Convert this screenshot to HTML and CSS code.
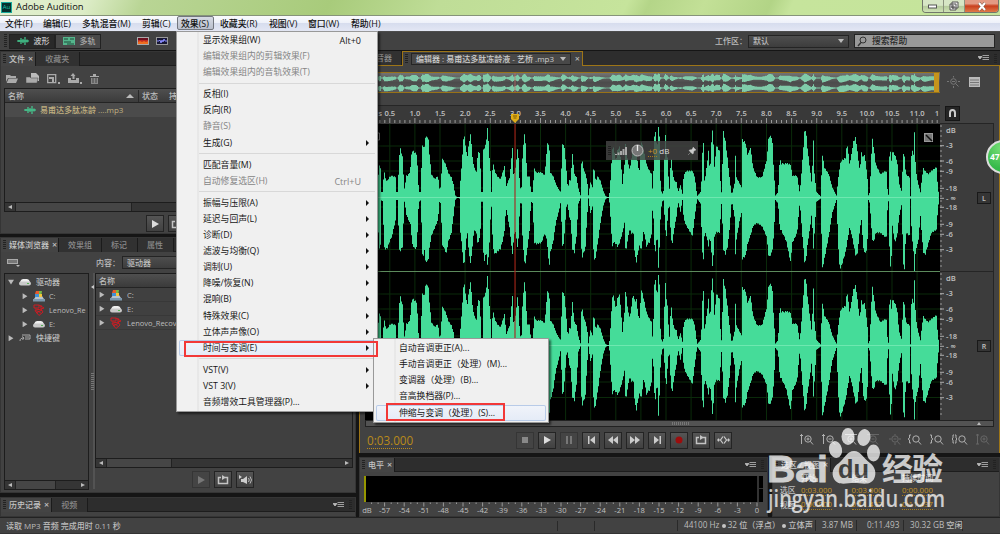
FILE: index.html
```html
<!DOCTYPE html>
<html lang="zh-CN">
<head>
    <meta charset="utf-8">
    <title>Adobe Audition</title>
    <link rel="stylesheet" href="styles.css">
</head>
<body>
<svg width="0" height="0" class="defs">
    <defs>
        <symbol id="wave" viewBox="0 0 12 8"><path d="M0 4h12M2 3v2M4 1v6M6 2v4M8 0v8M10 2.5v3" stroke="#45d898" stroke-width="1.1" fill="none"/></symbol>
        <symbol id="folder" viewBox="0 0 12 9"><path d="M0 8V1h4l1 1h5v2H2zM2.600 4.500H12L10 9H.6z" fill="#aaa"/></symbol>
        <symbol id="list" viewBox="0 0 11 6"><path d="M0 1.500h4L2 4zM4.500 .5H11M4.500 2.500H11M4.500 4.500H11" fill="#bbb" stroke="#bbb" stroke-width=".8"/></symbol>
        <symbol id="drive" viewBox="0 0 12 8"><path d="M1 4Q2 1 4 1h4q2 0 3 3z" fill="#eee"/><rect y="3.500" width="12" height="4" rx="2" fill="#c9c9c9"/><path d="M8 5.500h2" stroke="#55b555"/></symbol>
        <symbol id="cdrive" viewBox="0 0 12 12"><path d="M1 9l2-3h6l2 3v2H1z" fill="#b8c4cc"/><path d="M0 9h12v2.500H0z" fill="#7c98ad"/><path d="M3 1h3v3H2z" fill="#e85b2c"/><path d="M6 1h3l-.5 3H6z" fill="#75b945"/><path d="M2 4h4v3H2z" fill="#3f91d5"/><path d="M6 4h3v3H6z" fill="#f3c33b"/></symbol>
        <symbol id="rescue" viewBox="0 0 12 12"><path d="M1 1h5v3H1zM6 1l5 3-3 1 2 3-4 3.500-4-5 4 1 2 2M2 5l7 1M8 1v4M3 9l6-3" fill="none" stroke="#d81820" stroke-width=".9"/></symbol>
        <symbol id="shortcut" viewBox="0 0 12 8"><path d="M3 1h8v4H6M1 7c0-2 1-3 4-3M3 2.500L5 4 3.500 6M6 3h4" fill="none" stroke="#aaa"/></symbol>
        <symbol id="loop" viewBox="0 0 12 10"><path d="M4 2.500H1.500v6h9V2.500H8" fill="none" stroke="#c4c4c4" stroke-width="1.500"/><path d="M5 0l4 2.500L5 5z" fill="#c4c4c4"/></symbol>
        <symbol id="mag" viewBox="0 0 14 12"><circle cx="8" cy="5" r="3.200"/><path d="M10.300 7.300L13 10.500"/></symbol>
    </defs>
</svg>

<header class="title-bar">
    <span class="app-icon">Au</span>
    <span class="app-title">Adobe Audition</span>
    <div class="window-buttons">
        <i><svg width="10" height="6"><rect x=".5" y="2" width="8" height="3" fill="#fff" stroke="#555"/></svg></i>
        <i><svg width="10" height="10"><path d="M3 1h6v6H3zM1 3h6v6H1zM3 5h2v2H3z" fill="#eee" stroke="#555"/></svg></i>
        <i class="close"><svg width="10" height="9"><path d="M2 1l6 7M8 1L2 8" stroke="#754" stroke-width="3"/><path d="M2 1l6 7M8 1L2 8" stroke="#fff" stroke-width="2"/></svg></i>
    </div>
</header>

<nav class="menu-bar">
    <span>文件(F)</span><span>编辑(E)</span><span>多轨混音(M)</span><span>剪辑(C)</span><span class="open">效果(S)</span><span>收藏夹(R)</span><span>视图(V)</span><span>窗口(W)</span><span>帮助(H)</span>
</nav>

<div class="tool-bar">
    <i class="grip"></i>
    <button class="mode active"><svg width="12" height="8"><use href="#wave"/></svg>波形</button>
    <button class="mode"><svg width="12" height="8"><path d="M0 0h12v8H0z" fill="#55b58c"/><path d="M1 2h4M7 2h4M1 5h7M4 7h7" stroke="#1e4938"/></svg>多轨</button>
    <svg class="spectral" width="12" height="8"><path d="M0 0h12v8H0z" fill="#c22b22"/><path d="M1 1h10v2H1z" fill="#6d1020"/><path d="M1 7V5l2-1 2 1 2-1 2 1 2-1v3z" fill="#ee6d20"/><rect x=".5" y=".5" width="11" height="7" fill="none" stroke="#aaa"/></svg>
    <svg width="12" height="8"><rect x=".5" y=".5" width="11" height="7" fill="#171735" stroke="#999"/><path d="M1 4h2l1-1 1 3 1-3 1 2 1-3 1 2h2" fill="none" stroke="#898cff"/></svg>
    <span class="workspace">工作区：</span>
    <div class="select"><span>默认</span><i class="down"></i></div>
    <div class="search"><svg width="11" height="11"><circle cx="6" cy="4" r="3" fill="none" stroke="#333"/><path d="M4 6.500L1 10" stroke="#333" stroke-width="1.400"/></svg>搜索帮助</div>
</div>

<main>
    <div class="left">
        <section class="panel files">
            <div class="tabs"><span class="tab active"><i class="grip"></i>文件<b>×</b></span><span class="tab">收藏夹</span></div>
            <div class="file-tools">
                <svg width="12" height="9"><use href="#folder"/></svg>
                <svg width="13" height="11"><path d="M5 0h5l3 3v5H5z" fill="#bbb"/><path d="M0 4h4l1 1h7l-1 5H0z" fill="#aaa" stroke="#444" stroke-width=".5"/></svg>
                <svg width="13" height="10"><path d="M.7.700h8v8h-8z" fill="none" stroke="#aaa" stroke-width="1.300"/><path d="M2 3h5v5H5V5H2z" fill="#aaa"/><path d="M11 8h2v2h-2z" fill="#aaa"/></svg>
                <svg width="14" height="11"><path d="M0 5h3v2h5V5h3v5H0zM5 0l2.500 3h-1v3h-2V3h-2zM12 9h2v2h-2z" fill="#aaa"/></svg>
                <svg width="9" height="10"><path d="M0 2h3V0h3v2h3v1H0z" fill="#aaa"/><path d="M1 4h7v6H1z" fill="#888"/><path d="M3 4v5M6 4v5" stroke="#444"/></svg>
            </div>
            <div class="box file-list">
                <div class="head"><span class="name">名称</span><i class="up"></i><span class="state">状态</span><span>持</span></div>
                <div class="file"><svg width="12" height="8"><use href="#wave"/></svg>易甫达多肽冻龄 ....mp3</div>
                <div class="scroll"><i class="arrow-l"></i><span class="thumb"></span></div>
            </div>
            <div class="buttons file-buttons"><button><i class="play"></i></button><button><svg width="12" height="10"><use href="#loop"/></svg></button></div>
        </section>

        <section class="panel media">
            <div class="tabs"><span class="tab active"><i class="grip"></i>媒体浏览器<b>×</b></span><span class="tab">效果组</span><span class="tab">标记</span><span class="tab">属性</span></div>
            <div class="media-tools">
                <svg width="13" height="9"><rect x=".5" y="1.500" width="10" height="4" fill="#777" stroke="#aaa"/><path d="M9 7h4l-2 2z" fill="#bbb"/></svg>
                <span>内容：</span><div class="select">驱动器</div>
            </div>
            <div class="media-lists">
                <div class="box tree">
                    <div><i class="tri-d"></i><svg width="12" height="8"><use href="#drive"/></svg>驱动器</div>
                    <div class="sub"><i class="tri"></i><svg width="12" height="12"><use href="#cdrive"/></svg>C:</div>
                    <div class="sub"><i class="tri"></i><svg width="12" height="12"><use href="#rescue"/></svg>Lenovo_Re</div>
                    <div class="sub"><i class="tri"></i><svg width="12" height="8"><use href="#drive"/></svg>E:</div>
                    <div><i class="tri"></i><svg width="12" height="8"><use href="#shortcut"/></svg>快捷键</div>
                    <div class="scroll"><i class="arrow-l"></i><span class="thumb"></span><i class="arrow-r"></i></div>
                </div>
                <div class="splitter"><i></i></div>
                <div class="media-right">
                    <div class="box contents">
                        <div class="head"><span>名称</span></div>
                        <div class="entry"><i class="tri"></i><svg width="12" height="12"><use href="#cdrive"/></svg>C:</div>
                        <div class="entry"><i class="tri"></i><svg width="12" height="8"><use href="#drive"/></svg>E:</div>
                        <div class="entry"><i class="tri"></i><svg width="12" height="12"><use href="#rescue"/></svg>Lenovo_Recovery</div>
                        <div class="scroll"><i class="arrow-l"></i><span class="thumb"></span><i class="arrow-r"></i></div>
                    </div>
                    <div class="buttons">
                        <button class="off"><i class="play"></i></button>
                        <button><svg width="12" height="10"><use href="#loop"/></svg></button>
                        <button><svg width="13" height="10"><path d="M0 0l3 2-3 2zM2 4h2l4-3v8L4 7H2z" fill="#ccc"/><path d="M9.500 3q1.500 2 0 4M11 1.500q3 3.500 0 7" fill="none" stroke="#bbb"/></svg></button>
                    </div>
                </div>
            </div>
        </section>

        <section class="panel history">
            <div class="tabs"><span class="tab active"><i class="grip"></i>历史记录<b>×</b></span><span class="tab">视频</span><svg class="tab-menu" width="11" height="6"><use href="#list"/></svg><i class="grip end"></i></div>
        </section>
    </div>

    <div class="right">
        <section class="panel editor">
            <div class="tabs">
                <span class="tab mixer">音器</span>
                <span class="tab gold"><i class="grip"></i><span class="file-select">编辑器 : 易甫达多肽冻龄液 - 艺桥 .mp3<i class="down"></i></span><b>×</b></span>
                <svg class="tab-menu" width="11" height="6"><use href="#list"/></svg><i class="grip end"></i>
            </div>
            <div class="editor-body">
                <div class="overview-row">
                    <svg class="overview" width="575" height="21" viewBox="365 71 575 21"></svg>
                    <svg width="13" height="12" stroke="#777" fill="none"><circle cx="6.500" cy="5.500" r="2.800"/><path d="M8.500 7.500l3 3M5 5.500h3M6.500 0v1.500M0 5.500h2M11 5.500h2M6.500 10v2"/></svg>
                    <svg width="11" height="10"><path d="M0 0h11v10H0z" fill="#bbb"/><path d="M1 3h9M1 5.500h9M1 8h9" stroke="#777"/></svg>
                </div>
                <div class="wave-row">
                    <svg class="waveform" width="575" height="315" viewBox="365 105 575 315"></svg>
                    <svg class="levels" width="55" height="315" viewBox="940 105 55 315"></svg>
                </div>
                <div class="view-scroll"><i class="ribs"></i><i class="up"></i></div>
                <div class="transport">
                    <span class="time">0:03.000</span>
                    <div class="buttons">
                        <button class="off"><svg width="8" height="8"><path d="M1 1h6v6H1z" fill="#888"/></svg></button>
                        <button><i class="play"></i></button>
                        <button class="off"><svg width="8" height="8"><path d="M1 0h2v8H1zM5 0h2v8H5z" fill="#777"/></svg></button>
                        <button><svg width="9" height="8"><path d="M1 0h1.500v8H1zM8 0v8L3 4z" fill="#ccc"/></svg></button>
                        <button><svg width="10" height="8"><path d="M5 0v8L0 4zM10 0v8L5 4z" fill="#ccc"/></svg></button>
                        <button><svg width="10" height="8"><path d="M0 0l5 4-5 4zM5 0l5 4-5 4z" fill="#ccc"/></svg></button>
                        <button><svg width="9" height="8"><path d="M1 0l5 4-5 4zM6.500 0H8v8H6.500z" fill="#ccc"/></svg></button>
                        <button><svg width="8" height="8"><circle cx="4" cy="4" r="3.500" fill="#9c0d0d"/></svg></button>
                        <button><svg width="12" height="10"><use href="#loop"/></svg></button>
                        <button><svg width="13" height="8"><path d="M0 4h3M1.500 2.500v3M6 .5L3.500 4 6 7.500M7 .5L9.500 4 7 7.500M10 4h3M11.500 2.500v3" fill="none" stroke="#ccc" stroke-width="1.200"/></svg></button>
                    </div>
                    <div class="zooms">
                        <svg width="14" height="12"><use href="#mag"/><path d="M1.500 0v10M0 1.500h3M6.500 5h3M8 3.500v3"/></svg>
                        <svg width="14" height="12"><use href="#mag"/><path d="M1.500 0v10M0 1.500h3M6.500 5h3"/></svg>
                        <svg width="14" height="12"><use href="#mag"/><path d="M2 .5h12M6.500 5h3M8 3.500v3"/></svg>
                        <svg class="off" width="14" height="12"><use href="#mag"/><path d="M2 .5h12M6.500 5h3"/></svg>
                        <svg class="off" width="14" height="12"><use href="#mag"/><path d="M8 0v1M2 5h2M12 5h2M6.500 5h3M8 9v2"/></svg>
                        <svg width="14" height="12"><use href="#mag"/><path d="M3 1H1.500v3L0 5l1.500 1v3H3"/></svg>
                        <svg width="14" height="12"><use href="#mag"/><path d="M0 1h1.500v3L3 5 1.500 6v3H0"/></svg>
                        <svg width="16" height="12" viewBox="-2 0 16 12"><use href="#mag" width="14" height="12"/><path d="M0 1h-1v3l-1 1 1 1v3h1M1 1h1v3l1 1-1 1v3H1"/></svg>
                        <svg class="off" width="14" height="12"><use href="#mag"/><path d="M1.500 0v10M0 1h3M0 10h3M6.500 5h3M8 3.500v3"/></svg>
                    </div>
                </div>
            </div>
        </section>

        <div class="bottom">
            <section class="panel meter">
                <div class="tabs"><span class="tab active"><i class="grip"></i>电平<b>×</b></span><svg class="tab-menu" width="11" height="6"><use href="#list"/></svg><i class="grip end"></i></div>
                <div class="meter-bar"><i></i></div>
                <svg class="meter-scale" width="404" height="14" viewBox="360 502 404 14"></svg>
            </section>
            <section class="panel selection">
                <div class="tabs"><span class="tab active"><i class="grip"></i>选区 / 视图<b>×</b></span><svg class="tab-menu" width="11" height="6"><use href="#list"/></svg><i class="grip end"></i></div>
                <div class="times">
                    <span></span><span>开始</span><span>结束</span><span>持续时间</span>
                    <span>选区</span><em>0:03.000</em><em>0:03.000</em><em>0:00.000</em>
                    <span>视图</span><em>0:00.000</em><em>0:11.437</em><em>0:11.437</em>
                </div>
            </section>
        </div>
    </div>
</main>

<footer class="status-bar">
    <span class="message">读取 MP3 音频 完成用时 0.11 秒</span>
    <i class="s1"></i><i class="s2"></i>
    <span class="format">44100 Hz <i class="dot"></i> 32 位（浮点） <i class="dot"></i> 立体声</span>
    <span class="size">3.87 MB</span>
    <span class="length">0:11.493</span>
    <span class="free">30.32 GB 空闲</span>
</footer>

<div class="hud"><i class="grip"></i><svg width="12" height="8"><path d="M0 8V7h2v1zM2.500 8V5.500h2V8zM5 8V4h2v4zM7.500 8V2h2v6zM10 8V0h2v8z" fill="#aaa"/></svg><svg width="13" height="13"><circle cx="6.500" cy="6.500" r="5.500" fill="#777" stroke="#bbb"/><path d="M6.500 1v6" stroke="#eee" stroke-width="1.300"/></svg><span><em>+0</em> dB</span><svg class="pin" width="8" height="8"><path d="M5 0l3 3-1 .3-1.500 1.500v1.500L4.500 7 1 3.500 2 2.800h1.500L5 1zM2.500 5.500L0 8" fill="#ccc" stroke="#ccc" stroke-width=".4"/></svg></div>
<div class="badge">47</div>

<div class="menu effects">
    <div>显示效果组(W)<kbd>Alt+0</kbd></div>
    <div class="off">编辑效果组内的剪辑效果(F)</div>
    <div class="off">编辑效果组内的音轨效果(T)</div>
    <hr>
    <div>反相(I)</div>
    <div>反向(R)</div>
    <div class="off">静音(S)</div>
    <div class="more">生成(G)</div>
    <hr>
    <div>匹配音量(M)</div>
    <div class="off">自动修复选区(H)<kbd>Ctrl+U</kbd></div>
    <hr>
    <div class="more">振幅与压限(A)</div>
    <div class="more">延迟与回声(L)</div>
    <div class="more">诊断(D)</div>
    <div class="more">滤波与均衡(Q)</div>
    <div class="more">调制(U)</div>
    <div class="more">降噪/恢复(N)</div>
    <div class="more">混响(B)</div>
    <div class="more">特殊效果(C)</div>
    <div class="more">立体声声像(O)</div>
    <div class="more hover">时间与变调(E)</div>
    <hr>
    <div class="more">VST(V)</div>
    <div class="more">VST 3(V)</div>
    <div>音频增效工具管理器(P)...</div>
</div>
<div class="menu pitch">
    <div>自动音调更正(A)...</div>
    <div>手动音调更正（处理）(M)...</div>
    <div>变调器（处理）(B)...</div>
    <div>音高换档器(P)...</div>
    <div class="hover">伸缩与变调（处理）(S)...</div>
</div>
<div class="mark mark-effects"></div>
<div class="mark mark-pitch"></div>

<svg class="watermark" width="190" height="100" viewBox="760 420 190 100">
    <g fill="#fff">
        <text x="767" y="482" font-size="37" font-weight="700" stroke="#fff" stroke-width=".8" textLength="61" lengthAdjust="spacingAndGlyphs">Bai</text>
        <ellipse cx="835.500" cy="449.500" rx="6.500" ry="8.500" transform="rotate(-12 835.500 449.500)"/>
        <ellipse cx="848" cy="436.500" rx="6.500" ry="8.500"/>
        <ellipse cx="864" cy="437.500" rx="6.500" ry="8.500" transform="rotate(12 864 437.500)"/>
        <ellipse cx="873.500" cy="453" rx="6.500" ry="8.500"/>
        <path d="M854 451c-7 0-9 7-15 12-6 4-8 10-5 16 4 7 12 4 20 4s16 3 20-4c3-6 1-12-4-16-7-5-9-12-16-12z"/>
        <text x="882" y="480" font-size="31" font-weight="700" class="cn" textLength="61">经验</text>
        <text x="768" y="507" font-size="22.500" class="url" textLength="177" lengthAdjust="spacingAndGlyphs">jingyan.baidu.com</text>
    </g>
    <text x="838" y="478" font-size="25" font-weight="700" fill="#444" textLength="31" lengthAdjust="spacingAndGlyphs">du</text>
</svg>
<script src="app.js"></script>
</body>
</html>
```
FILE: styles.css
```css
* {
    box-sizing: border-box;
}

body {
    margin: 0;
    width: 1000px;
    height: 534px;
    overflow: hidden;
    position: relative;
    background: #151515;
    color: #bdbdbd;
    font: 500 8px/12px "Open Sans", "Noto Sans CJK SC", sans-serif;
}

i, em {
    font-style: normal;
}

svg {
    flex: none;
    display: block;
}

.defs {
    position: absolute;
}

.title-bar {
    height: 16px;
    display: flex;
    align-items: center;
    background: linear-gradient(115deg, #e1efce 0, #dcecc6 80px, #b9d595 130px, #a8cb7b 300px, #bfdd97 400px, #c6e49c 570px, #b4d588 590px, #c3e097 640px, #b2d486 700px, #c6e49c 720px, #c4e49a 1000px);
    border-bottom: 1px solid #86947a;
    color: #111;
}

.app-icon {
    width: 11px;
    height: 11px;
    margin: 0 4px 1px 1px;
    border: 1px solid #16a99b;
    background: #07302d;
    color: #16c9b2;
    font-size: 6px;
    line-height: 9px;
    text-align: center;
}

.app-title {
    font-size: 9.4px;
    margin-bottom: 1px;
}

.window-buttons {
    display: flex;
    align-self: flex-start;
    height: 13px;
    width: 77px;
    margin: 0 1px 0 auto;
    border: 1px solid #71776b;
    border-top: 0;
    border-radius: 0 0 4px 4px;
    overflow: hidden;
}

.window-buttons i {
    width: 21px;
    display: flex;
    align-items: center;
    justify-content: center;
    border-right: 1px solid #8c947f;
    background: linear-gradient(#d7e6c5 45%, #b4c99b 50%, #cfe3b5);
}

.window-buttons .close {
    flex: 1;
    border: 0;
    background: linear-gradient(#e39a83 30%, #c93f1d 50%, #df7a4a);
}

.menu-bar {
    height: 15px;
    display: flex;
    background: linear-gradient(#fafbfd 0, #eef1f9 45%, #d7ddee 50%, #e3e7f4);
    color: #111;
    font-size: 8.9px;
    line-height: 15px;
}

.menu-bar span {
    width: 39px;
    padding-left: 5px;
    white-space: nowrap;
}

.menu-bar span:nth-child(1) { width: 38px; }
.menu-bar span:nth-child(3) { width: 60px; }
.menu-bar span:nth-child(4) { width: 40px; }
.menu-bar span:nth-child(6) { width: 49px; }
.menu-bar span:nth-child(8) { width: 43px; }

.menu-bar .open {
    width: 37px;
    margin-right: 1px;
    line-height: 13px;
    height: 14px;
    border: 1px solid #72767e;
    border-radius: 2px;
    background: linear-gradient(#d6dae4, #b9bfcc);
    padding-left: 3px;
}

.tool-bar {
    height: 19px;
    display: flex;
    align-items: center;
    background: #424242;
    border-top: 1px solid #4d4d4d;
}

.grip {
    display: inline-block;
    width: 3px;
    height: 9px;
    background: repeating-linear-gradient(#222 0 1px, transparent 1px 2px);
    flex: none;
}

.tool-bar .grip {
    margin: 0 2px 0 4px;
    height: 14px;
}

.mode {
    display: flex;
    align-items: center;
    gap: 4.5px;
    width: 46px;
    height: 15px;
    padding: 0 0 0 7px;
    border: 1px solid #222;
    background: #494949;
    color: #aaa;
    font: inherit;
}

.mode.active {
    background: #292929;
    color: #c6c6c6;
}

.spectral {
    margin: 0 7px 0 36px;
}

.workspace {
    width: 33px;
    margin-left: 547px;
    white-space: nowrap;
}

.select {
    display: flex;
    align-items: center;
    width: 101px;
    height: 13px;
    padding: 0 4px;
    border: 1px solid #242424;
    background: linear-gradient(#4e4e4e, #3d3d3d);
}

.down, .up {
    width: 0;
    height: 0;
    border: 3px solid transparent;
    border-top: 4px solid #bbb;
    border-bottom: 0;
    margin-left: auto;
    flex: none;
}

.up {
    border: 4px solid transparent;
    border-bottom: 4px solid #bbb;
    border-top: 0;
}

.search {
    display: flex;
    gap: 4px;
    align-items: center;
    width: 141px;
    height: 14px;
    margin-left: 5px;
    padding-left: 2px;
    border: 1px solid #242424;
    background: #999;
    color: #292929;
    font-size: 8.8px;
}

main {
    display: flex;
    gap: 3px;
    height: 467px;
    padding-top: 1px;
}

.left {
    width: 356px;
    display: flex;
    flex-direction: column;
    gap: 3px;
}

.right {
    width: 641px;
    display: flex;
    flex-direction: column;
    gap: 4px;
}

.panel {
    background: #424242;
    border: 1px solid #353535;
    min-width: 0;
    overflow: hidden;
}

.tabs {
    display: flex;
    align-items: center;
    height: 14px;
    background: #2d2d2d;
    border-bottom: 1px solid #1d1d1d;
}

.tab {
    height: 14px;
    line-height: 14px;
    padding: 0 10px 0 9px;
    color: #8a8a8a;
    background: #313131;
    border-right: 1px solid #1b1b1b;
    white-space: nowrap;
}

.tab.active {
    display: flex;
    align-items: center;
    gap: 3px;
    padding: 0 2px;
    background: #444;
    color: #c4c4c4;
}

.tab b {
    font-size: 9px;
    font-weight: 600;
}

.tab-menu {
    margin-left: auto;
    margin-right: 5px;
}

.grip.end {
    margin-right: 3px;
}

.files {
    height: 184px;
    padding-right: 3px;
}

.files .tab:nth-child(2) {
    width: 44px;
}

.file-tools {
    display: flex;
    align-items: center;
    height: 22px;
    gap: 8px;
    padding: 3px 0 0 5px;
}

.box {
    border: 1px solid #1d1d1d;
    background: #404040;
    overflow: hidden;
}

.file-list {
    height: 124px;
    margin-left: 3px;
    display: flex;
    flex-direction: column;
}

.head {
    display: flex;
    align-items: center;
    height: 14px;
    flex: none;
    padding-left: 3px;
    background: linear-gradient(#4f4f4f, #3b3b3b);
    border-bottom: 1px solid #242424;
}

.head .up {
    margin: 0 4px 0 0;
}

.name {
    width: 118px;
}

.state {
    width: 31px;
    padding-left: 3px;
    border-left: 1px solid #292929;
}

.file {
    display: flex;
    align-items: center;
    height: 14px;
    gap: 4px;
    padding-left: 19px;
    background: #4b4b4b;
    color: #c0b080;
    white-space: pre;
}

.scroll {
    display: flex;
    align-items: center;
    height: 9px;
    flex: none;
    margin-top: auto;
    border-top: 1px solid #1d1d1d;
    background: #353535;
}

.thumb {
    height: 8px;
    background: #464646;
    border: 1px solid #222;
    border-width: 0 1px;
    width: 117px;
}

.arrow-l, .arrow-r {
    border: 2.5px solid transparent;
    border-right: 4px solid #bbb;
    border-left: 0;
    margin: 0 3px;
}

.arrow-r {
    border-left: 4px solid #bbb;
    border-right: 0;
    margin-left: auto;
}

.buttons {
    display: flex;
    gap: 4px;
}

.buttons button {
    width: 18px;
    height: 17px;
    padding: 0;
    display: flex;
    align-items: center;
    justify-content: center;
    background: linear-gradient(#555, #414141);
    border: 1px solid #242424;
}

.buttons .off {
    background: #444;
    border-color: #353535;
}

.play {
    border: 4px solid transparent;
    border-left: 7px solid #ddd;
    border-right: 0;
}

.off .play {
    border-left-color: #777;
}

.file-buttons {
    padding: 3px 0 0 145px;
}

.media {
    height: 257px;
}

.media .tab {
    width: 36px;
    padding-right: 0;
}

.media .tab:nth-child(2) {
    width: 43px;
}

.media .tab.active {
    width: 58px;
}

.media-tools {
    display: flex;
    align-items: center;
    height: 21px;
    padding-left: 6px;
}

.media-tools span {
    margin-left: 76px;
    width: 26px;
    white-space: nowrap;
}

.media-tools .select {
    width: 180px;
}

.media-lists {
    display: flex;
    padding-left: 3px;
}

.tree {
    width: 85px;
    height: 217px;
    display: flex;
    flex-direction: column;
    padding-top: 1px;
}

.tree > div:not(.scroll), .entry {
    display: flex;
    align-items: center;
    height: 14px;
    gap: 5px;
    padding-left: 3px;
    white-space: nowrap;
    flex: none;
}

.tree > .sub:not(.scroll) {
    padding-left: 17px;
    gap: 4.5px;
    font-size: 7.3px;
}

.contents .entry {
    font-size: 7.5px;
}

.tree .thumb {
    width: 41px;
}

.tri, .tri-d {
    width: 6px;
    height: 6px;
    flex: none;
    background: #bbb;
    clip-path: polygon(10% 0, 90% 50%, 10% 100%);
}

.tri-d {
    clip-path: polygon(0 10%, 100% 10%, 50% 90%);
}

.splitter {
    width: 6px;
    height: 216px;
    padding: 100px 2px 0;
    border-right: 2px solid #535353;
    position: relative;
}

.splitter::before {
    content: "";
    display: block;
    position: absolute;
    left: 2px;
    top: 12px;
    border: 2.5px solid transparent;
    border-right: 3px solid #ccc;
    border-left: 0;
}

.splitter i {
    display: block;
    width: 3px;
    height: 18px;
    background: repeating-linear-gradient(#777 0 1px, transparent 1px 2px);
}

.contents {
    width: 258px;
    height: 195px;
    display: flex;
    flex-direction: column;
}

.entry {
    border-bottom: 1px solid #383838;
}

.contents .thumb {
    width: 66px;
}

.media-right .buttons {
    padding: 3px 0 0 97px;
}

.history {
    height: 20px;
    margin-top: 1px;
}

.editor {
    height: 403px;
    border: 0;
}

.editor .tabs {
    height: 15px;
    border-bottom: 1px solid #9d7517;
}

.mixer {
    width: 43px;
    padding-left: 17px;
}

.tab.gold {
    display: flex;
    align-items: center;
    width: 181px;
    height: 15px;
    padding: 0 2px;
    border: 1px solid #9d7517;
    border-bottom: 0;
    background: #424242;
}

.gold b {
    margin-left: 4px;
    color: #bbb;
}

.file-select {
    display: flex;
    align-items: center;
    width: 163px;
    height: 12px;
    margin-left: 3px;
    padding: 0 4px;
    border: 1px solid #252525;
    background: #484848;
    color: #ccc;
}

.editor-body {
    height: 388px;
    padding: 5px 4px 0 5px;
    border: 1px solid #9d7517;
    border-top: 0;
}

.overview-row {
    display: flex;
    align-items: center;
    height: 22px;
}

.overview-row > svg:nth-child(2) {
    margin: 0 9px 0 7px;
}

.wave-row {
    display: flex;
    margin-top: 12px;
    height: 315px;
}

.view-scroll {
    width: 629px;
    height: 7px;
    display: flex;
    align-items: center;
    background: #535353;
    border: 1px solid #222;
    padding-right: 12px;
}

.ribs {
    width: 18px;
    height: 3px;
    margin-left: 306px;
    background: repeating-linear-gradient(90deg, #777 0 1px, transparent 1px 2px);
}

.view-scroll .up {
    border-width: 0 2px 3px;
}

.transport {
    display: flex;
    align-items: center;
    height: 26px;
}

em {
    color: #c59425;
    border-bottom: 1px dotted #a47b1e;
}

.time {
    width: 151px;
    color: #b98a1a;
    font-size: 11.7px;
    text-decoration: underline dotted 1px;
    text-underline-offset: 3px;
    padding-left: 2px;
}

.zooms {
    display: flex;
    gap: 7.7px;
    margin-left: 68px;
    fill: none;
    stroke: #b0b0b0;
}

.zooms .off {
    stroke: #666;
}

.bottom {
    display: flex;
    gap: 4px;
    height: 60px;
}

.meter {
    width: 409px;
}

.meter-bar {
    height: 26px;
    margin: 4px 4px 0;
    background: #000;
    border-left: 2px solid #969600;
    display: flex;
}

.meter-bar i {
    width: 6px;
    margin-left: auto;
    border-left: 2px solid #333;
    background: linear-gradient(#000 12px, #333 12px 13px, #000 13px);
}

.selection {
    width: 228px;
}

.times {
    display: grid;
    grid-template-columns: 21px 50.5px 50.5px 50px;
    grid-template-rows: 12px 13px 16px;
    align-items: center;
    padding: 0 0 0 7px;
    font-size: 7.8px;
    line-height: 11px;
    white-space: nowrap;
}

.times em {
    justify-self: start;
    line-height: 9px;
}

.status-bar {
    height: 17px;
    display: flex;
    align-items: center;
    background: #424242;
    border-top: 1px solid #222;
    border-bottom: 1px solid #333;
    font-size: 8.2px;
    white-space: nowrap;
}

.message {
    width: 557px;
    padding-left: 6px;
    font-size: 8px;
}

.s1, .s2 {
    height: 10px;
    width: 37px;
    border-left: 1px solid #292929;
}

.s2 {
    width: 83px;
}

.format, .size, .length, .free {
    height: 11px;
    line-height: 10px;
    border-left: 1px solid #292929;
    padding-left: 6px;
}

.format {
    width: 138px;
}

.dot {
    display: inline-block;
    width: 4px;
    height: 4px;
    border-radius: 50%;
    background: #c4c4c4;
}

.size {
    width: 41px;
}

.length {
    width: 47px;
    padding-left: 10px;
}

.free {
    width: 60px;
    border-right: 1px solid #292929;
}

.menu {
    position: absolute;
    color: #161616;
    background: linear-gradient(90deg, #f1f1f1 20px, #dfdfdf 21px, #f0f0f0 22px);
    border: 1px solid #999;
    box-shadow: 2px 2px 2px #0008;
    font-size: 8.8px;
    font-weight: 400;
}

.menu > div {
    height: 16.15px;
    line-height: 17px;
    padding: 0 14px 0 24px;
    display: flex;
    white-space: nowrap;
}

.effects {
    left: 176px;
    top: 31px;
    width: 202px;
    height: 381px;
    padding: 0 2px;
}

.menu hr {
    height: 1px;
    margin: 2.4px 0 2.4px 20px;
    border: 0;
    background: #d8d8d8;
}

.menu kbd {
    margin-left: auto;
    font: inherit;
    font-size: 9px;
}

.menu .off {
    color: #858585;
}

.menu .more {
    padding-right: 6px;
}

.more::after {
    content: "";
    margin: 5px 0 0 auto;
    height: 0;
    border: 3px solid transparent;
    border-left: 3px solid #111;
    border-right: 0;
}

.menu .hover {
    background: linear-gradient(#f1f4fa, #e4ebf7);
    box-shadow: inset 0 0 0 1px #b8cbe8;
    border-radius: 2px;
}

.pitch {
    left: 373px;
    top: 338px;
    width: 176px;
    height: 85px;
    padding: 1px 2px;
}

.pitch > div {
    padding-left: 23px;
}

.mark {
    position: absolute;
    border: 2px solid #f23838;
}

.mark-effects {
    left: 184px;
    top: 341px;
    width: 194px;
    height: 16px;
}

.mark-pitch {
    left: 386px;
    top: 403px;
    width: 119px;
    height: 18px;
}

.hud {
    position: absolute;
    left: 606px;
    top: 141px;
    width: 92px;
    height: 19px;
    display: flex;
    align-items: center;
    gap: 4px;
    padding-left: 2px;
    background: rgba(70, 70, 70, .82);
    color: #ddd;
}

.hud span {
    white-space: nowrap;
    line-height: 10px;
}

.pin {
    margin-left: 15px;
}

.badge {
    position: absolute;
    left: 986px;
    top: 140px;
    width: 34px;
    height: 34px;
    border: 2px solid #ddd;
    border-radius: 50%;
    background: radial-gradient(circle at 45% 20%, #78df77, #35b94a 70%);
    color: #fff;
    font-size: 8.5px;
    font-weight: 700;
    line-height: 29px;
    padding-left: 2px;
}

.watermark {
    position: absolute;
    left: 760px;
    top: 420px;
    opacity: .75;
    font-family: "Liberation Sans", sans-serif;
}

.watermark .cn {
    font-family: "Noto Sans CJK SC", sans-serif;
}

.watermark .url {
    font-family: "Open Sans", sans-serif;
    font-weight: 600;
}

.overview, .waveform, .levels, .meter-scale {
    fill: #c0c0c0;
    font-size: 7.6px;
    text-anchor: middle;
}

.waveform, .levels {
    font-weight: 600;
}
```
FILE: app.js
```js
// envelope points: x, top, bottom (3 units per pixel, x from 376, centre line at 232)
const points = `-33 190 280 -30 130 380 -15 160 370 -4 170 350 2 215 245 8 132 390 12 140 380 14 215 240 20 215 245 22 140 385 28 180 390 34 180 385 38 170 370 48 165 345 58 168 300 60 215 240
65 215 240 67 110 395 72 82 395 80 115 380 82 205 245 86 205 245 88 165 280 94 165 295 100 155 310 104 115 320 106 85 375 115 92 390 122 100 385
124 170 290 128 215 245 134 215 240 136 70 375 140 70 440 142 90 375 148 45 430 155 40 430 160 110 380 165 160 350 175 175 325 185 165 300
188 205 245 194 200 250 196 115 370 203 118 390 210 135 405 215 155 370 225 170 340 232 195 280 236 225 240 242 231 233 250 231 235
252 180 340 258 100 400 262 30 450 266 60 410 272 110 330 278 60 410 283 35 435 288 110 380 293 140 330 300 155 340 304 95 380 308 80 365
312 140 330 315 215 245 319 215 245 321 85 400 325 75 440 328 70 390 334 12 445 338 100 390 342 150 300 345 215 260 349 125 375 355 150 410
362 165 400 372 175 390 380 150 360 386 130 320 388 205 260 392 190 280 400 170 330 408 75 410 411 160 370 416 150 330 424 75 390 428 140 330
430 205 250 436 200 250 438 110 350 444 35 430 448 80 430 452 170 390 460 165 330 463 215 245 470 215 250 472 140 370 480 155 375 495 155 370
505 165 340 512 65 370 518 65 450 522 155 400 530 165 370 538 190 310 548 210 270 554 215 240 556 75 370 560 60 390 565 85 330 570 150 260
575 215 250 577 175 290 582 180 300 588 100 390 594 160 400 600 170 350 606 205 250 612 225 235 616 95 440 620 140 400 626 155 400
632 180 290 636 225 235 642 185 280 648 200 260 652 130 430 658 185 410 663 165 380 672 180 310 680 210 260 688 229 235 698 231 233
702 180 290 707 90 380 712 75 370 718 120 375 724 80 385 730 75 370 738 190 340 744 130 310 748 50 410 752 110 370 760 150 325 766 100 350
770 70 330 775 95 410 780 90 430 788 160 380 795 60 390 802 90 330 810 130 380 820 150 370 826 160 340 829 225 240 834 40 380 838 30 400
842 90 330 846 12 450 850 60 360 852 180 300 856 225 245 862 210 240 866 15 330 870 90 350 874 110 290 878 225 240 884 100 365 888 150 370
893 180 330 900 185 290 905 215 245 912 195 275 918 220 240 922 160 300 930 150 320 948 150 350 955 170 290 962 228 236 972 215 250
976 170 350 980 20 450 984 180 350 988 160 340 996 90 380 1001 160 350 1004 70 390 1009 20 450 1014 140 350 1020 70 340 1030 90 340 1032 180 300 1036 228 236
1040 25 390 1047 60 405 1054 120 380 1060 180 320 1066 225 240 1074 190 290 1077 100 410 1080 170 360 1090 190 300 1095 200 280 1098 55 420 1107 65 410 1114 105 370 1122 75 350
1130 140 320 1142 170 310 1157 170 320 1170 120 350 1177 40 420 1187 45 400 1192 150 350 1197 226 240 1205 215 250 1210 110 330 1214 130 330 1230 125 370 1242 130 430 1248 165 370
1262 165 340 1270 220 245 1277 130 340 1284 30 430 1288 20 430 1294 90 370 1300 140 330 1306 190 280 1311 55 390 1314 160 340 1320 215 245 1332 228 236
1338 100 450 1344 140 420 1357 160 350 1367 200 280 1380 226 240 1388 150 440 1393 120 450 1407 110 400 1412 65 370 1420 135 320 1430 60 370 1438 45 415 1444 100 400 1450 150 330
1455 95 300 1460 110 380 1464 100 400 1472 160 395 1476 225 240 1480 215 250 1487 45 360 1492 80 370 1498 130 340 1512 160 340 1530 150 355 1532 200 280 1537 229 235
1540 45 455 1544 130 440 1548 90 320 1555 100 370 1562 120 350 1568 190 290 1576 215 250 1580 90 440 1585 110 455 1588 160 340 1600 170 350 1602 228 236
1606 60 350 1610 120 380 1614 35 455 1618 150 390 1625 190 370 1632 215 290 1640 140 400 1646 150 410 1655 160 375 1665 150 340 1680 140 330 1685 210 260 1689 228 235`
    .split(/\s+/).map(Number);

const xs = [];
for (let i = 0; i < points.length; i += 3) xs.push(points.slice(i, i + 3));

// one closed outline, a step for each screen pixel
function outline() {
    let top = '', bottom = '';
    let k = 0;
    for (let x = -33; x < 1689; x += 3) {
        while (k < xs.length - 2 && xs[k + 1][0] <= x) k++;
        const a = xs[k], b = xs[k + 1];
        const t = (x - a[0]) / (b[0] - a[0]);
        const noise = ((x * 7919 + 33) % 17) / 17;
        const up = (232 - (a[1] + (b[1] - a[1]) * t)) * (1 - noise * .06);
        const down = ((a[2] + (b[2] - a[2]) * t) - 232) * (1 - noise * .05);
        const px = 376 + x / 3;
        top += `L${px} ${(-up / 3).toFixed(1)}h1`;
        bottom = `L${px + 1} ${(down / 3).toFixed(1)}h-1` + bottom;
    }
    return 'M365 0' + top + bottom + 'Z';
}

const shape = outline();
const second = 50.22;

let grid = '', ruler = '';
for (let n = 0; n <= 114; n++) {
    const x = 364.700 + n * second / 10;
    const major = n % 5 === 0;
    ruler += `<path d="M${x.toFixed(1)} ${major ? 118 : 120}V123" stroke="#999"/>`;
    if (major && n) {
        grid += `<path d="M${x.toFixed(1)} 124V420"/>`;
        ruler += `<text x="${x}" y="116">${(n / 10).toFixed(1)}</text>`;
    }
}
[0, 148].forEach(dy => {
    [146, 161, 171, 188, 207, 224, 234, 249.5].forEach(y => grid += `<path d="M365 ${y + dy}H940"/>`);
});

document.querySelector('.waveform').innerHTML = `
    <rect x="365" y="105" width="575" height="19" fill="#393939"/>
    <path d="M365 105.500H940" stroke="#262626"/>
    ${ruler}<text x="380" y="116">s</text><text x="937" y="116">1</text>
    <rect x="365" y="124" width="575" height="296" fill="#000"/>
    <g stroke="#0a2a0a">${grid}</g>
    <g fill="#45dc99"><path d="${shape}" transform="translate(0 197.500)"/><path d="${shape}" transform="translate(0 345.500)"/></g>
    <path d="M365 197.500H938M365 345.500H938" stroke="#6ee8b0"/>
    <path d="M365 271.500H940" stroke="#5c8a5c"/>
    <path d="M377 133h2.500v7H377" fill="none" stroke="#777"/>
    <path d="M515 124V420" stroke="#b01818" stroke-width="1.600" opacity=".65"/>
    <path d="M511 114h8v5l-4 4-4-4z" fill="#e0ae18"/><path d="M513 116h4M513.500 118h3" stroke="#7b5a00"/>
    <rect x="924.500" y="133.500" width="8" height="8" fill="#777" stroke="#999"/><path d="M926 135l6 6" stroke="#111" stroke-width="1.500"/>`;

document.querySelector('.overview').innerHTML = `
    <defs><linearGradient id="ov" x2="0" y2="1"><stop stop-color="#777"/><stop offset=".5" stop-color="#4c4c4c"/><stop offset="1" stop-color="#5a5a5a"/></linearGradient></defs>
    <rect x="365" y="71" width="575" height="21" fill="url(#ov)"/>
    <g fill="#80cba9"><path d="${shape}" transform="translate(0 77) scale(1 .065)"/><path d="${shape}" transform="translate(0 87) scale(1 .065)"/></g>
    <path d="M365 77H938M365 87H938" stroke="#80cba9" stroke-width=".7"/>
    <path d="M515 72V91" stroke="#c66" opacity=".7"/>
    <path d="M365 71.500H940M365 91.500H940" stroke="#987218"/>
    <rect x="934" y="72" width="5" height="19" fill="#c5941c"/>`;

const marks = [['dB', 130], ['-3', 145.7], ['-6', 161], ['-9', 171.3], ['-18', 188.3], ['- ∞', 198.3], ['-18', 207.3], ['-9', 224.3], ['-6', 234.3], ['-3', 249.7]];
let levels = '<rect x="940" y="123" width="54" height="297" fill="#3c3c3c"/><path d="M940 123.500H994M940 271.500H994M993.500 123V420" stroke="#252525"/>';
[0, 148].forEach((dy, i) => {
    for (let y = 126; y < 270; y += 5) levels += `<path d="M940 ${y + dy}h2" stroke="#999"/>`;
    marks.forEach(([label, y], n) => levels += `<path d="M940 ${y + dy}h4" stroke="#aaa" ${n ? '' : 'opacity="0"'}/><text x="946" y="${y + dy + 2.7}" text-anchor="start">${label}</text>`);
    levels += `<rect x="977.500" y="${192.500 + dy}" width="13" height="11" fill="#353535" stroke="#191919"/><text x="984" y="${200.700 + dy}" font-size="7">${'LR'[i]}</text>`;
});
levels += '<rect x="945.500" y="106.500" width="14" height="14" fill="#252525" stroke="#151515"/><path d="M950 117v-4q0-3 2.500-3t2.500 3v4" fill="none" stroke="#ccc" stroke-width="2"/>';
document.querySelector('.levels').innerHTML = levels;

let scale = '<text x="367" y="513">dB</text>';
for (let db = -59; db <= 0; db++) {
    const x = (757 + db * 6.533).toFixed(1);
    scale += `<path d="M${x} 502.500v${db % 3 ? 1.5 : 4}" stroke="#999"/>`;
    if (db % 3 === 0) scale += `<text x="${x}" y="513">${db}</text>`;
}
document.querySelector('.meter-scale').innerHTML = scale;
```
